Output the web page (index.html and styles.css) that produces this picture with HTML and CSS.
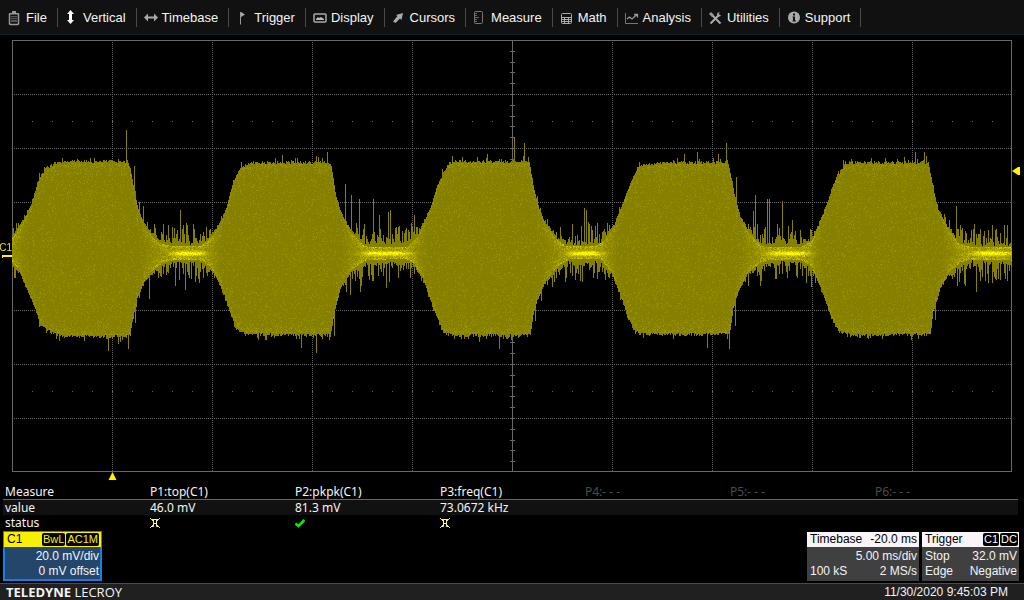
FILE: index.html
```
<!DOCTYPE html>
<html lang="en">
<head>
<meta charset="utf-8">
<title>Teledyne LeCroy Oscilloscope</title>
<link rel="stylesheet" href="styles.css">
</head>
<body>
<nav class="menu" aria-label="Main menu">
  <button class="menu-item"><svg class="icon" viewBox="0 0 14 16"><path d="M1.500 4v9.500q0 1 1 1h7q1 0 1-1V4" fill="none" stroke="#999" stroke-width="1.500"/><path d="M1 3h10v1.500H1zM4 1h4v2H4z" fill="#999"/><path d="M3 6h6v6H3z" fill="#555"/><path d="M3 7.500h6M3 9.500h6" stroke="#222"/></svg>File</button>
  <button class="menu-item"><svg class="icon" viewBox="0 0 14 16"><path d="M5.500 0 9 4H7v6h2l-3.500 4L2 10h2V4H2z" fill="#fff"/></svg>Vertical</button>
  <button class="menu-item"><svg class="icon" viewBox="0 0 14 16"><path d="m0 7.500 4-4v3h6v-3l4 4-4 4v-3H4v3z" fill="#aaa"/></svg>Timebase</button>
  <button class="menu-item"><svg class="icon" viewBox="0 0 14 16"><path d="M4 2h1l4 2.500L5 7H4z" fill="#aaa"/><path d="M4.500 2v12.500" stroke="#999"/></svg>Trigger</button>
  <button class="menu-item"><svg class="icon" viewBox="0 0 14 16"><rect x="1" y="4" width="12" height="8" rx="1" fill="none" stroke="#aaa" stroke-width="1.500"/><path d="M3 10V9l2-2 1 1 2-1 3 2v1z" fill="#bbb"/></svg>Display</button>
  <button class="menu-item"><svg class="icon" viewBox="0 0 14 16"><path d="M11 3 9.500 10 8 8.500 3.500 13 1 11.500 5.500 6 4 5z" fill="#aaa"/></svg>Cursors</button>
  <button class="menu-item"><svg class="icon" viewBox="0 0 14 16"><rect x="1.500" y="1.500" width="8" height="12" rx="1" fill="none" stroke="#777"/><path d="M2 3.500h2M2 5.500h2M2 7.500h4M2 9.500h2M2 11.500h2" stroke="#666652"/></svg>Measure</button>
  <button class="menu-item"><svg class="icon" viewBox="0 0 14 16"><rect x="1.500" y="3.500" width="10" height="10" rx="1" fill="none" stroke="#aaa"/><path d="M1.500 7.500h10M1.500 9.500h10M1.500 11.500h10M4.500 7v7M8.500 7v7" stroke="#aaa"/></svg>Math</button>
  <button class="menu-item"><svg class="icon" viewBox="0 0 14 16"><path d="M.5 3v10.500H13" fill="none" stroke="#777"/><path d="m2 9 2.500-2L7 9l5-4.500M9 4.500h3.500v3" fill="none" stroke="#999" stroke-width="1.300"/></svg>Analysis</button>
  <button class="menu-item"><svg class="icon" viewBox="0 0 14 16"><path d="m1.500 13.500 9-9M3 5l8.500 8.500" stroke="#aaa" stroke-width="2"/><path d="m0 4 2-2 3 3-2 2z" fill="#999"/><path d="M9 2.500q-2 2 0 3.500t3-1l-2 .3-.8-1L11 2.500z" fill="#aaa"/></svg>Utilities</button>
  <button class="menu-item"><svg class="icon" viewBox="0 0 14 16"><circle cx="7" cy="7.500" r="6" fill="#aaa"/><path d="M6 3.500h2v2H6zM5.500 6.500H8v4h1v1H5.500v-1H6v-3h-.5z" fill="#111"/></svg>Support</button>
</nav>

<main class="scope">
  <section class="plot" aria-label="Waveform display">
    <div class="screen">
      <canvas class="trace" id="trace" width="1000" height="432"></canvas>
      <span class="channel-label">C1</span>
      <svg class="channel-mark" viewBox="0 0 10 3"><path d="M0 0h10v2H1v1H0z" fill="#fff200"/></svg>
      <svg class="level-mark" viewBox="0 0 8 8"><path d="M0 4 6 0h2v8H6z" fill="#fff200"/></svg>
      <svg class="time-mark" viewBox="0 0 9 8"><path d="m4.500 0 4 8h-8z" fill="#fff200"/></svg>
    </div>
  </section>

  <table class="measure">
    <thead>
      <tr><th scope="col">Measure</th><th scope="col">P1:top(C1)</th><th scope="col">P2:pkpk(C1)</th><th scope="col">P3:freq(C1)</th><th scope="col" class="off">P4:- - -</th><th scope="col" class="off">P5:- - -</th><th scope="col" class="off">P6:- - -</th></tr>
    </thead>
    <tbody>
      <tr class="values"><th scope="row">value</th><td>46.0 mV</td><td>81.3 mV</td><td>73.0672 kHz</td><td></td><td></td><td></td></tr>
      <tr><th scope="row">status</th>
        <td><svg class="status" viewBox="0 0 10 10"><path d="M0 .5h1M9 .5h1M1 1.500h1M8 1.500h1M2 2.500h1M7 2.500h1M2 7.500h1M7 7.500h1M1 8.500h1M8 8.500h1M0 9.500h1M9 9.500h1" stroke="#fff200"/><path d="M1 8.500h2.500V1.500h3v7H9M3 5.500h4M2 1.500h6" fill="none" stroke="#fff580"/></svg></td>
        <td><svg class="status" viewBox="0 0 10 10"><path d="m.5 5.500 3 2.500L9.500 2" fill="none" stroke="#00f000" stroke-width="2.500"/></svg></td>
        <td><svg class="status" viewBox="0 0 10 10"><path d="M0 .5h1M9 .5h1M1 1.500h1M8 1.500h1M2 2.500h1M7 2.500h1M2 7.500h1M7 7.500h1M1 8.500h1M8 8.500h1M0 9.500h1M9 9.500h1" stroke="#fff200"/><path d="M1 8.500h2.500V1.500h3v7H9M3 5.500h4M2 1.500h6" fill="none" stroke="#fff580"/></svg></td>
        <td></td><td></td><td></td></tr>
    </tbody>
  </table>

  <div class="descriptors">
    <button class="box channel">
      <span class="box-head"><span>C1</span><span class="tags"><span class="tag">BwL</span><span class="tag">AC1M</span></span></span>
      <span class="row end">20.0 mV/div</span>
      <span class="row end">0 mV offset</span>
    </button>
    <div class="right">
      <button class="box timebase">
        <span class="box-head"><span>Timebase</span><span>-20.0 ms</span></span>
        <span class="row end">5.00 ms/div</span>
        <span class="row"><span>100 kS</span><span>2 MS/s</span></span>
      </button>
      <button class="box trigger">
        <span class="box-head"><span>Trigger</span><span class="tags"><span class="tag">C1</span><span class="tag">DC</span></span></span>
        <span class="row"><span>Stop</span><span>32.0 mV</span></span>
        <span class="row"><span>Edge</span><span>Negative</span></span>
      </button>
    </div>
  </div>
</main>

<footer class="footer">
  <span class="brand"><b>TELEDYNE</b> LECROY</span>
  <time datetime="2020-11-30T21:45:03">11/30/2020 9:45:03 PM</time>
</footer>
<script src="trace.js"></script>
</body>
</html>
```
FILE: styles.css
```
* { box-sizing: border-box; }

body {
  margin: 0;
  min-height: 100vh;
  display: flex;
  flex-direction: column;
  background: #000;
  color: #f4f4f4;
  font: 12px/16px "Liberation Sans", Arial, sans-serif;
}

button {
  margin: 0;
  padding: 0;
  border: 0;
  background: none;
  color: inherit;
  font: inherit;
  text-align: left;
}

.menu {
  display: flex;
  align-items: center;
  height: 35px;
  padding: 1px 0 0 3px;
  background: #111;
  border-bottom: 1px solid #122030;
}

.menu-item {
  display: flex;
  align-items: center;
  gap: 4px;
  height: 19px;
  padding: 0 10px 0 7px;
  border-right: 1px solid #4a4a4a;
  font-size: 13px;
  white-space: nowrap;
}

.menu-item:first-child { padding-left: 5px; }

.icon { width: 14px; height: 16px; }

.scope { flex: 1; }

.plot { padding: 5px 12px 12px; }

.screen { position: relative; }

.trace {
  display: block;
  width: 100%;
  height: auto;
}

.channel-label {
  position: absolute;
  right: 100%;
  bottom: 50%;
  font-size: 10px;
  color: #e8e000;
}

.channel-mark {
  position: absolute;
  right: 100%;
  top: 50%;
  width: 10px;
  height: 3px;
  margin-top: -1px;
}

.level-mark {
  position: absolute;
  left: 100%;
  top: 30%;
  width: 8px;
  height: 8px;
  margin-top: -3px;
}

.time-mark {
  position: absolute;
  left: 10%;
  top: 100%;
  width: 9px;
  height: 8px;
  margin-left: -4px;
}

.measure {
  width: calc(100% - 9px);
  margin-left: 3px;
  table-layout: fixed;
  border-collapse: separate;
  border-spacing: 0;
  font-family: "Noto Sans", Tahoma, sans-serif;
}

.measure th,
.measure td {
  height: 16px;
  padding: 0 2px;
  line-height: 15px;
  font-weight: normal;
  text-align: left;
}

.measure thead th { border-bottom: 1px solid #66646c; }

.measure .off { color: #4c4c4c; }

.measure tbody th,
.measure tbody td {
  height: 15px;
  vertical-align: top;
}

.values { background: #111; }

.status {
  display: block;
  width: 10px;
  height: 10px;
  margin-top: 3px;
}

.descriptors {
  display: flex;
  justify-content: space-between;
  padding: 1px 5px 2px 3px;
}

.right { display: flex; gap: 3px; padding-top: 1px; }

.box {
  display: flex;
  flex-direction: column;
  background: #404040;
  line-height: 15px;
}

.box-head,
.row {
  display: flex;
  justify-content: space-between;
  width: 100%;
  padding: 0 2px 0 3px;
  white-space: nowrap;
}

.box-head {
  align-items: center;
  margin-bottom: 2px;
  background: #f8f4f8;
  color: #000;
}

.end { justify-content: flex-end; }

.channel {
  width: 99px;
  padding-bottom: 1px;
  border: 1px solid #1480e8;
  box-shadow: inset 0 0 0 1px #1480e8;
  background: #24466a;
}

.channel .box-head { background: #f8f000; }

.timebase { width: 112px; }

.trigger { width: 97px; }

.timebase,
.trigger { padding-bottom: 2px; }

.tags { display: flex; gap: 1px; }

.tag {
  padding: 0 1px;
  border-radius: 2px;
  background: #000;
  color: #fff;
  font-size: 11px;
  line-height: 13px;
}

.channel .tag { color: #f8f000; }

.trigger .box-head { padding-right: 1px; }

.footer {
  display: flex;
  align-items: center;
  justify-content: space-between;
  height: 17px;
  padding: 0 16px 0 6px;
  border-top: 1px solid #4c485c;
  background: #202020;
}

.brand { font: 13px/16px "Open Sans", sans-serif; }
```
FILE: trace.js
```
const canvas = document.getElementById("trace");
const ctx = canvas.getContext("2d");
const W = canvas.width, H = canvas.height;
const OX = 12, OY = 40, MID = 253;

let seed = 7;
function rand() {
  seed = (seed * 1664525 + 1013904223) >>> 0;
  return seed / 4294967296;
}

// Graticule
ctx.fillStyle = "#686868";
ctx.fillRect(0, 0, W, 1);
ctx.fillRect(0, H - 1, W, 1);
ctx.fillRect(0, 0, 1, H);
ctx.fillRect(W - 1, 0, 1, H);
for (let i = 1; i < 10; i++)
  for (let y = 2; y < H; y += 2) ctx.fillRect(i * 100, y, 1, 1);
for (let j = 1; j < 8; j++)
  for (let x = 2; x < W; x += 2) ctx.fillRect(x, j * 54, 1, 1);
for (let x = 20; x < W; x += 20) {
  ctx.fillRect(x, 81, 1, 1);
  ctx.fillRect(x, 351, 1, 1);
}
ctx.fillRect(500, 0, 1, H);
for (let k = 1; k < 40; k++) ctx.fillRect(498, Math.round(k * 10.8), 5, 1);

// Envelope key points
const upper = [[12,238],[20,226],[27,214],[33,199],[36,189],[40,178],[45,170],[55,164],[67,163],[127,163],[130,170],[132,182],[135,197],[138,210],[143,223],[152,237],[160,243],[172,246],[200,246],[213,235],[222,219],[227,205],[230,193],[236,176],[241,168],[252,164],[329,164],[331,168],[335,193],[340,212],[350,232],[363,245],[370,247],[407,247],[417,237],[425,220],[432,203],[437,187],[447,166],[453,163],[529,163],[533,187],[538,207],[545,224],[555,238],[566,246],[594,246],[602,242],[613,228],[620,210],[628,190],[638,167],[663,164],[728,164],[733,190],[740,217],[747,230],[760,245],[768,247],[802,246],[812,240],[820,222],[828,200],[836,178],[845,166],[857,164],[928,164],[933,190],[938,210],[947,228],[958,243],[968,246],[1011,247]];
const lower = [[12,262],[20,271],[28,290],[35,307],[40,322],[47,328],[55,332],[67,334],[127,334],[130,332],[133,313],[137,297],[143,282],[153,269],[163,262],[175,259],[200,260],[210,266],[217,277],[223,290],[228,306],[235,325],[245,332],[330,333],[335,307],[340,287],[350,270],[365,260],[405,258],[413,262],[423,277],[433,307],[443,330],[453,333],[530,333],[533,313],[537,299],[545,280],[557,266],[568,259],[600,258],[612,273],[620,293],[628,317],[637,330],[643,332],[729,332],[733,307],[738,290],[747,272],[760,262],[770,259],[800,259],[810,265],[820,284],[830,313],[838,329],[850,333],[930,332],[933,310],[940,287],[947,273],[960,262],[970,259],[1011,260]];
const spikesUp = {126:130,134:166,139:202,143:206,150:229,154:224,180:210,193:224,203:232,316:156,327:152,345:184,351:195,359:199,373:199,379:215,388:212,390:210,399:226,487:154,514:137,524:143,572:224,584:208,586:210,588:222,592:230,684:154,697:152,718:154,726:143,736:177,753:211,755:195,764:229,767:199,769:199,777:224,782:201,792:220,800:230,915:152,924:152,956:206,962:228,974:224,978:234,996:229};
const spikesDown = {14:277,84:340,108:350,118:343,128:348,135:322,149:298,175:285,185:289,191:278,301:347,316:352,334:335,346:291,350:294,360:291,369:279,386:287,398:277,479:341,499:348,535:320,541:300,552:286,580:280,707:347,729:348,735:325,748:285,761:280,775:278,787:277,797:277,935:319,957:285,959:281,976:291,988:282,992:282};

// Quiet stretches between bursts: centre and half width
const quietSpans = [[188, 17], [386, 24], [585, 17], [788, 21], [991, 20]];

function lerp(points, x) {
  let i = 1;
  while (i < points.length - 1 && points[i][0] < x) i++;
  const [x0, y0] = points[i - 1], [x1, y1] = points[i];
  return y0 + (y1 - y0) * (x - x0) / (x1 - x0);
}

function put(x, y, t) {
  const v = Math.max(0, Math.min(1, t));
  ctx.fillStyle = `rgb(${Math.round(134 + 121 * v)},${Math.round(128 + 120 * v)},0)`;
  ctx.fillRect(x - OX, y - OY, 1, 1);
}

for (let x = 12; x < 1012; x++) {
  const a = lerp(upper, x), b = lerp(lower, x);
  const half = (b - a) / 2;
  const neck = Math.max(0, Math.min(1, (40 - half) / 32));
  const quiet = Math.max(0, Math.min(1, (22 - half) / 12));
  const big = half > 60 ? 1 : 0;
  let y0 = a - rand() * (2 + big);
  let y1 = b + rand() * (2 + big);
  if (rand() < 0.14) y0 -= rand() * 6;
  if (rand() < 0.14) y1 += rand() * 5;
  y0 -= quiet * Math.pow(rand(), 3) * 20 + neck * rand() * 3;
  y1 += quiet * Math.pow(rand(), 3) * 20 + neck * rand() * 3;
  if (spikesUp[x]) y0 = spikesUp[x];
  if (spikesDown[x]) y1 = spikesDown[x];
  let core = 0;
  for (const [c, w] of quietSpans) core += Math.exp(-Math.pow(Math.abs(x - c) / w, 3));
  for (let y = Math.round(y0); y <= Math.round(y1); y++) {
    let t = 0;
    if (y >= a && y <= b) {
      const u = Math.abs(y - (a + b) / 2) / half;
      const edge = Math.min(y - a, b - y);
      t = rand() < 0.09 + 0.4 * Math.exp(-edge / 5) ? 0.15 : 0;
      t += neck * neck * rand() * 0.6 * (0.4 + 0.6 * u * u);
      t += core * (0.6 + 0.8 * rand()) * Math.exp(-Math.pow((y - MID) / 2.2, 2));
    }
    put(x, y, t);
  }
}
```
